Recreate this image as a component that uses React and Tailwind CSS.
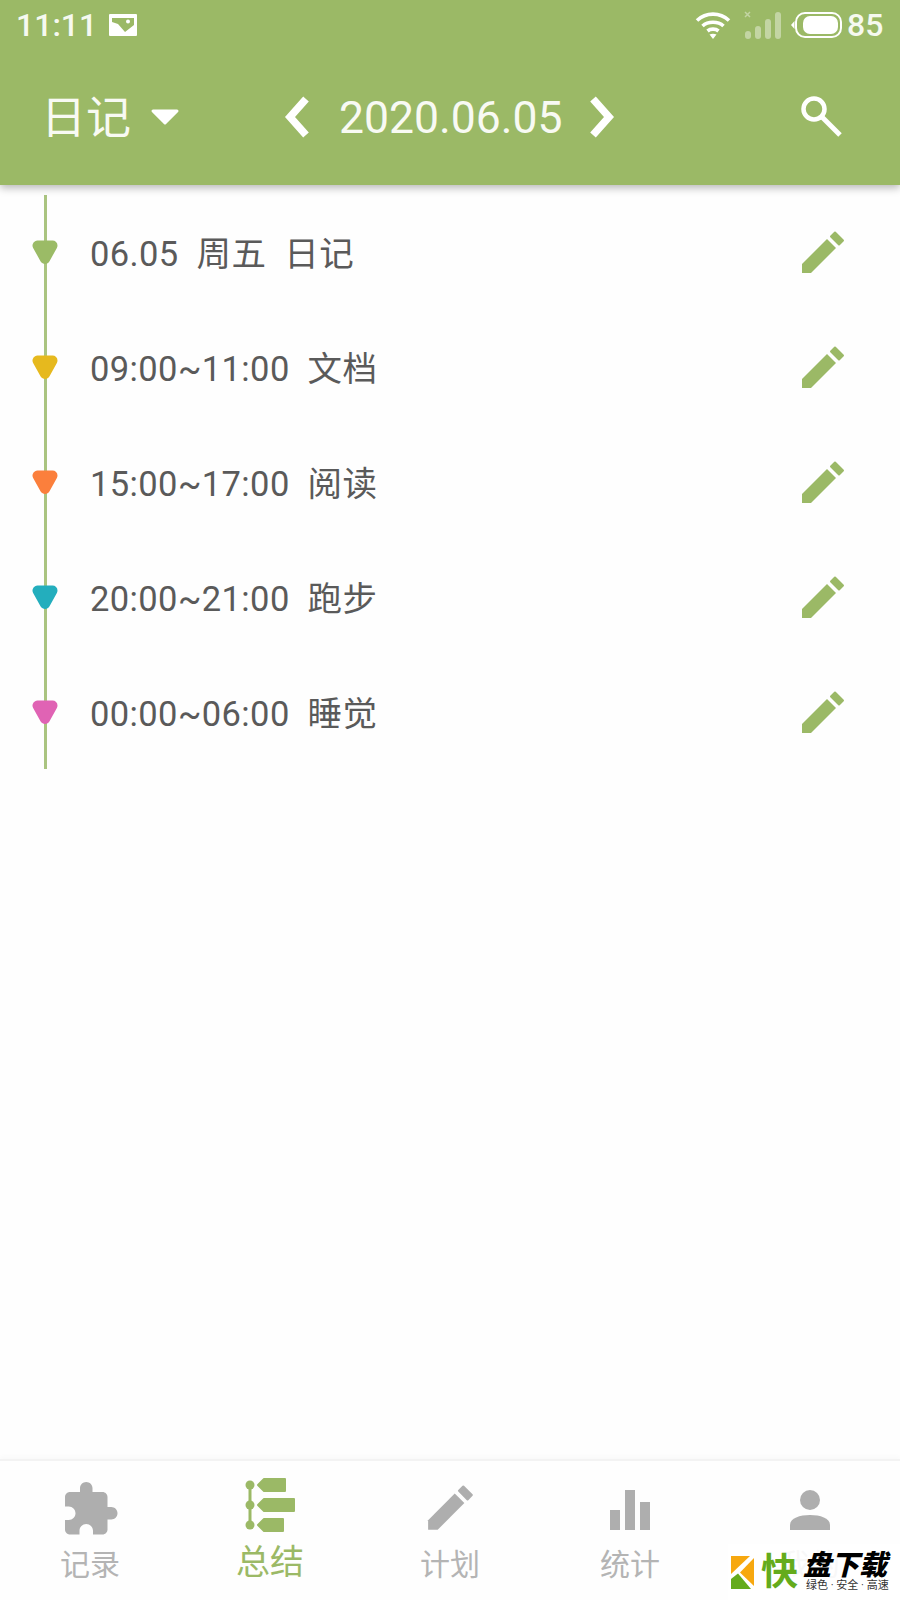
import React from "react";

const GREEN = "#9bb966";

const entries = [
  { text: "06.05  周五  日记", color: "#9bbb66" },
  { text: "09:00~11:00  文档", color: "#e6b91e" },
  { text: "15:00~17:00  阅读", color: "#fb7f3c" },
  { text: "20:00~21:00  跑步", color: "#23aebd" },
  { text: "00:00~06:00  睡觉", color: "#e063b4" },
];

const Pencil = ({ size, color, className }) => (
  <svg width={size} height={size} viewBox="0 0 46 46" className={className}>
    <path d="M2 42 L2 33 L27 8 L36 17 L11 42 Z" fill={color} />
    <path d="M31 5.500 L35 1.500 L43 9.500 L39 13.500 Z" fill={color} stroke={color} strokeWidth="2" strokeLinejoin="round" />
  </svg>
);

const Chevron = ({ points }) => (
  <svg width="34" height="44" viewBox="0 0 34 44">
    <polyline points={points} fill="none" stroke="#fff" strokeWidth="7.500" />
  </svg>
);

const StatusBar = () => (
  <div className="flex h-[50px] items-center text-[32px] font-medium text-[#f6f9f0]">
    <span className="ml-[16px] w-[93px] leading-none">11:11</span>
    <svg width="28" height="22" viewBox="0 0 28 22">
      <rect width="28" height="22" rx="1" fill="#fff" />
      <path d="M3 4 H25 V11 L16 18 L9 10 L3 8 Z" fill={GREEN} />
      <circle cx="19" cy="7.500" r="2" fill="#fff" />
    </svg>
    <div className="ml-auto flex items-center">
      <svg width="36" height="28" viewBox="0 0 36 28" fill="none" stroke="#fff" strokeWidth="3.600">
        <path d="M2 9.500 C11 1 25 1 34 9.500" />
        <path d="M7.500 15 C13 10 23 10 28.500 15" />
        <path d="M12.500 20 C15.500 17.500 20.500 17.500 23.500 20" />
        <path d="M18 28 L14.500 23.500 C16.500 22.500 19.500 22.500 21.500 23.500 Z" fill="#fff" stroke="none" />
      </svg>
      <svg width="38" height="28" viewBox="0 0 38 28" className="ml-[13px] opacity-40">
        <path d="M1 1 L6 6 M6 1 L1 6" stroke="#fff" strokeWidth="1.500" />
        <rect x="1" y="20" width="6" height="8" rx="3" fill="#fff" />
        <rect x="11" y="15" width="6" height="13" rx="3" fill="#fff" />
        <rect x="21" y="8" width="6" height="20" rx="3" fill="#fff" />
        <rect x="31" y="1" width="6" height="27" rx="3" fill="#fff" />
      </svg>
      <svg width="51" height="26" viewBox="0 0 51 26" className="ml-[9px]">
        <path d="M0 13 L3.500 9 V17 Z" fill="#fff" />
        <rect x="5" y="1" width="45" height="24" rx="9" fill="none" stroke="#fff" strokeWidth="2" />
        <rect x="12" y="4" width="35" height="18" rx="7" fill="#fff" />
      </svg>
      <span className="ml-[5px] mr-[17px] w-[36px] leading-none">85</span>
    </div>
  </div>
);

const Header = () => (
  <header className="relative z-10 h-[185px] shrink-0 bg-[#9bb966] shadow-[0_3px_8px_rgba(0,0,0,0.28)]">
    <StatusBar />
    <div className="flex h-[133px] items-center text-[44.5px] text-[#f8faf3]">
      <span className="ml-[41px] mt-[4px] w-[91px] text-[45px] leading-none">日记</span>
      <svg width="30" height="18" viewBox="0 0 30 18" className="ml-[18px]">
        <path d="M3 3 H27 L15 15 Z" fill="#fff" stroke="#fff" strokeWidth="3" strokeLinejoin="round" />
      </svg>
      <div className="ml-[104px]">
        <Chevron points="22,4 6,22 22,40" />
      </div>
      <span className="ml-[21px] mt-[4px] w-[224px] leading-none">2020.06.05</span>
      <div className="ml-[18px]">
        <Chevron points="12,4 28,22 12,40" />
      </div>
      <svg width="44" height="44" viewBox="0 0 44 44" fill="none" stroke="#fff" strokeWidth="4.500" className="ml-[184px]">
        <circle cx="15" cy="14" r="10.500" />
        <path d="M22 21 L41 40" strokeWidth="5" />
      </svg>
    </div>
  </header>
);

const Timeline = () => (
  <main className="relative min-h-0 flex-1 bg-[#fefefe] pt-[10px]">
    <div className="absolute left-[43.5px] top-[10px] h-[574px] w-[3px] bg-[#aac480]" />
    {entries.map((entry) => (
      <div key={entry.text} className="relative flex h-[115px] items-center">
        <svg width="28" height="26" viewBox="0 0 28 26" className="ml-[31px] -mt-[1px]">
          <path d="M6.500 6.500 H21.500 L14 20 Z" fill={entry.color} stroke={entry.color} strokeWidth="10" strokeLinejoin="round" />
        </svg>
        <span className="ml-[31px] mt-[4px] whitespace-pre text-[34.5px] leading-none tracking-[0.4px] text-[#5a5a5a]">{entry.text}</span>
        <Pencil size={46} color={GREEN} className="ml-auto mr-[54px] mt-[2px]" />
      </div>
    ))}
  </main>
);

const TabIcon = ({ children }) => (
  <svg width="60" height="60" viewBox="0 0 60 60">
    {children}
  </svg>
);

const tabs = [
  {
    label: "记录",
    icon: (
      <TabIcon>
        <path
          transform="translate(0 4.500) scale(2.500)"
          fill="#aeaeae"
          d="M20.500 11H19V7c0-1.100-.9-2-2-2h-4V3.500C13 2.120 11.880 1 10.500 1S8 2.120 8 3.500V5H4c-1.100 0-1.990.9-1.990 2v3.800H3.500c1.490 0 2.700 1.210 2.700 2.700s-1.210 2.700-2.700 2.700H2V20c0 1.100.9 2 2 2h3.800v-1.500c0-1.490 1.210-2.700 2.700-2.700 1.490 0 2.700 1.210 2.700 2.700V22H17c1.100 0 2-.9 2-2v-4h1.500c1.380 0 2.500-1.120 2.500-2.500S21.880 11 20.500 11z"
        />
      </TabIcon>
    ),
  },
  {
    label: "总结",
    active: true,
    icon: (
      <TabIcon>
        <rect x="8.500" y="8" width="3" height="44" fill={GREEN} />
        <circle cx="10" cy="10" r="4.500" fill={GREEN} />
        <circle cx="10" cy="30" r="4.500" fill={GREEN} />
        <circle cx="10" cy="50" r="4.500" fill={GREEN} />
        <path d="M18 10 L24 4 H45 V16 H24 Z" fill={GREEN} stroke={GREEN} strokeWidth="2" strokeLinejoin="round" />
        <path d="M18 30 L24 24 H54 V36 H24 Z" fill={GREEN} stroke={GREEN} strokeWidth="2" strokeLinejoin="round" />
        <path d="M18 50 L24 44 H43 V56 H24 Z" fill={GREEN} stroke={GREEN} strokeWidth="2" strokeLinejoin="round" />
      </TabIcon>
    ),
  },
  {
    label: "计划",
    icon: <Pencil size={49} color="#aeaeae" className="mt-[9px]" />,
  },
  {
    label: "统计",
    icon: (
      <TabIcon>
        <rect x="10" y="35" width="10" height="20" fill="#aeaeae" />
        <rect x="25" y="15" width="10" height="40" fill="#aeaeae" />
        <rect x="40" y="27" width="10" height="28" fill="#aeaeae" />
      </TabIcon>
    ),
  },
  {
    label: "我的",
    icon: (
      <TabIcon>
        <circle cx="30" cy="25" r="10" fill="#aeaeae" />
        <path d="M10 55 V50 C10 43 20 40 30 40 S50 43 50 50 V55 Z" fill="#aeaeae" />
      </TabIcon>
    ),
  },
];

const BottomNav = () => (
  <nav className="relative grid h-[141px] shrink-0 grid-cols-5 border-t-2 border-[#f3f3f3] bg-[#fefefe] pt-[14px] shadow-[0_-3px_4px_rgba(0,0,0,0.02)]">
    {tabs.map((tab) => (
      <div key={tab.label} className="flex flex-col items-center">
        <div className="flex h-[60px] w-[60px] items-center justify-center">{tab.icon}</div>
        <span
          className={
            tab.active
              ? "mt-[5px] text-[34px] leading-[44px] text-[#9bb966]"
              : "mt-[5px] text-[30px] leading-[50px] text-[#b4b4b4]"
          }
        >
          {tab.label}
        </span>
      </div>
    ))}
  </nav>
);

// download-site badge that sits over the corner of the tab bar
const SiteBadge = () => (
  <div className="absolute bottom-0 right-0 flex h-[56px] w-[172px] items-center bg-white/90 pl-[3px]">
    <svg width="24" height="33" viewBox="0 0 24 33" className="shrink-0">
      <path d="M0 0 H19 L0 18 Z" fill="#f7a80f" />
      <path d="M23 2 V30 L9 16.500 Z" fill="#f7a80f" />
      <path d="M0 23 L7 17.500 L20 33 H0 Z" fill="#64ab1c" />
    </svg>
    <span className="ml-[6px] w-[39px] text-[37px] font-bold leading-none text-[#64ab1c]">快</span>
    <div className="ml-[3px] flex flex-col">
      <span className="text-[28px] font-black italic leading-[28px] text-black">盘下载</span>
      <span className="whitespace-pre pl-[3px] text-[11px] leading-[12px] text-[#333333]">绿色 · 安全 · 高速</span>
    </div>
  </div>
);

const App = () => (
  <div className="relative flex h-[1600px] w-[900px] flex-col overflow-hidden bg-[#fefefe] font-[Roboto,'Noto_Sans_CJK_SC',sans-serif]">
    <Header />
    <Timeline />
    <BottomNav />
    <SiteBadge />
  </div>
);

export default App;
